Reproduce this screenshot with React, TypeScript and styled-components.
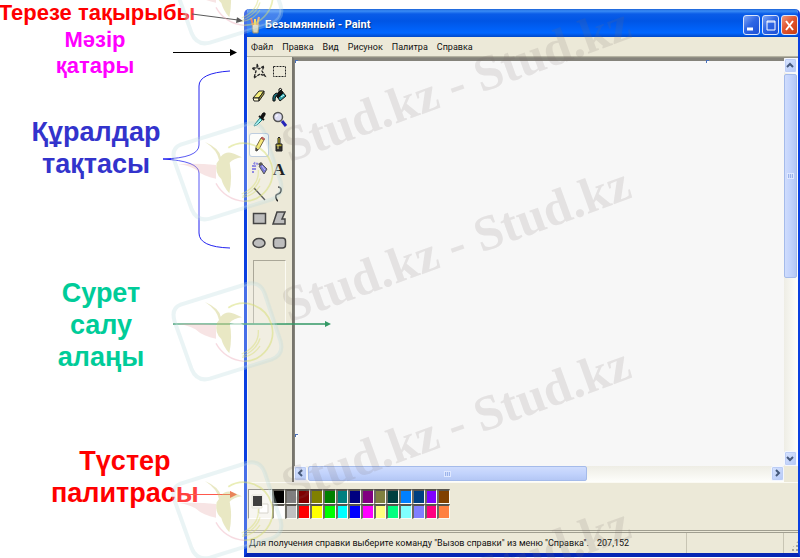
import React from "react";
import styled, { createGlobalStyle, css } from "styled-components";

const UI_FONT = 'Roboto, "Liberation Sans", sans-serif';

const GlobalStyle = createGlobalStyle`
  * { box-sizing: border-box; }
  body { margin: 0; background: #ffffff; font-family: "Liberation Sans", Arial, sans-serif; }
  button { margin: 0; padding: 0; border: 0; background: none; font: inherit; color: inherit; }
  svg { display: block; }
`;

const Slide = styled.main`
  position: relative;
  display: grid;
  grid-template-columns: 244px minmax(0, 1fr);
  min-height: 100vh;
  overflow: hidden;
`;

/* Notes column */

const Notes = styled.aside`
  display: flex;
  flex-direction: column;
  align-items: flex-start;
`;

const Note = styled.p<{ $color: string; $width: number; $top: number; $large?: boolean }>`
  display: flex;
  flex-direction: column;
  align-items: center;
  width: ${(p) => p.$width}px;
  margin: ${(p) => p.$top}px 0 0;
  color: ${(p) => p.$color};
  font-weight: bold;
  font-size: ${(p) => (p.$large ? 27 : 22)}px;
  line-height: ${(p) => (p.$large ? 32 : 26)}px;
  white-space: nowrap;
`;

/* Paint window */

const Window = styled.section`
  display: flex;
  flex-direction: column;
  min-width: 0;
  margin: 9px 0 1px;
  border: solid #0a3fe0;
  border-width: 0 2px 4px 3px;
  border-bottom-color: #0626b4;
  border-radius: 5px 5px 0 0;
  background: #ece9d8;
  overflow: hidden;
  color: #111111;
  font-family: ${UI_FONT};
`;

const TitleBar = styled.header`
  display: flex;
  align-items: center;
  gap: 4px;
  height: 28px;
  margin: 0 -2px 0 -3px;
  padding: 3px 2px 0 6px;
  background: linear-gradient(#1a62d8 0, #3a8cf5 2px, #0a5ce8 5px, #0055e5 12px, #0061f8 20px, #0066ff 24px, #0048c8 28px);
`;

const Title = styled.h1`
  flex: 1;
  margin: 0;
  color: #ffffff;
  font-size: 11px;
  line-height: 16px;
  font-weight: bold;
  text-shadow: 1px 1px 1px #07307f;
  white-space: nowrap;
`;

const WindowButtons = styled.div`
  display: flex;
  gap: 2px;
`;

const WindowButton = styled.button<{ $close?: boolean }>`
  width: 17px;
  height: 20px;
  border: 1px solid #dbe6fb;
  border-radius: 3px;
  background: ${(p) =>
    p.$close
      ? "linear-gradient(135deg, #f0987c, #e2552f 45%, #c83c12)"
      : "linear-gradient(135deg, #7fa5f5, #2f66e4 45%, #1c4fd6)"};
`;

const MenuBar = styled.nav`
  display: flex;
  align-items: center;
  gap: 9px;
  height: 20px;
  padding-left: 4px;
  border-bottom: 1px solid #b5b3a2;
`;

const MenuItem = styled.button`
  line-height: 16px;
  font-size: 9px;
`;

const Workspace = styled.div`
  display: grid;
  grid-template-columns: 45px minmax(0, 1fr);
  flex: 1;
  min-height: 0;
`;

const ToolPanel = styled.div`
  padding: 2px 3px 0 1px;
  border-left: 1px solid #fbfaf3;
`;

const ToolGrid = styled.div`
  display: grid;
  grid-template-columns: 20px 20px;
  grid-auto-rows: 1fr;
  height: 196px;
`;

const ToolButton = styled.button<{ $active?: boolean }>`
  display: flex;
  align-items: center;
  justify-content: center;
  border-radius: 3px;
  ${(p) =>
    p.$active &&
    css`
      background: #fbfbf8;
      box-shadow: inset 0 0 0 1px #a9bcd4;
    `}
`;

const ToolOptions = styled.div`
  height: 64px;
  width: 33px;
  margin: 5px 0 0 4px;
  border: 1px solid;
  border-color: #aaa798 #fbfaf3 #fbfaf3 #aaa798;
`;

const View = styled.div`
  display: grid;
  grid-template: minmax(0, 1fr) 16px / minmax(0, 1fr) 14px;
  border-top: 1px solid #918f84;
  border-left: 2px solid #77756d;
`;

const Sheet = styled.div`
  position: relative;
  border: solid #85837b;
  border-width: 3px 0 0 1px;
  background: #f7f7f7;
`;

const Handle = styled.i<{ $left: string; $top: string }>`
  position: absolute;
  left: ${(p) => p.$left};
  top: ${(p) => p.$top};
  width: 3px;
  height: 3px;
  border: solid #4a70b8;
  border-width: 1px 0 0 1px;
  background: #ffffff;
`;

const ScrollBar = styled.div<{ $vertical?: boolean }>`
  display: flex;
  flex-direction: ${(p) => (p.$vertical ? "column" : "row")};
  gap: 1px;
  padding: ${(p) => (p.$vertical ? "0 1px 0 0" : "0 0 1px")};
  background: ${(p) =>
    p.$vertical ? "linear-gradient(90deg, #eeede5, #fefefb)" : "linear-gradient(#eeede5, #fefefb)"};
`;

const ScrollButton = styled.button<{ $vertical?: boolean }>`
  display: flex;
  align-items: center;
  justify-content: center;
  flex: none;
  width: 13px;
  height: 15px;
  border: 1px solid #f4f7ff;
  border-radius: 2px;
  background: linear-gradient(135deg, #d8e4fe, #b4c8f7);
  box-shadow: inset 0 0 0 1px #bccdf5;
`;

const Thumb = styled.div<{ $vertical?: boolean; $size: string }>`
  display: flex;
  align-items: center;
  justify-content: center;
  flex: 0 0 ${(p) => p.$size};
  border: 1px solid #a5bbea;
  border-radius: 2px;
  background: linear-gradient(${(p) => (p.$vertical ? "90deg" : "180deg")}, #cfdcfd, #c2d3fc 50%, #b4c7f5);
`;

const Grip = styled.span`
  width: 7px;
  height: 6px;
  border: 1px solid #dfe8ff;
  background: repeating-linear-gradient(90deg, #9cb4ea 0 1px, #cfdcfd 1px 2px);
`;

const Spacer = styled.span`
  flex: 1;
`;

const PaletteBar = styled.div`
  display: flex;
  align-items: flex-start;
  height: 48px;
  padding: 6px 1px 0;
  border-top: 1px solid #fbfaf3;
`;

const CurrentColors = styled.div`
  width: 24px;
  height: 30px;
  border: 1px solid;
  border-color: #77756d #ffffff #ffffff #77756d;
  background: #f4f3ec;
`;

const Swatches = styled.div`
  display: grid;
  grid-template: repeat(2, 15px) / repeat(14, 1fr);
  width: 178px;
`;

const Swatch = styled.button<{ $color: string }>`
  border: solid;
  border-width: 2px 1px 1px 2px;
  border-color: #55534c #fbfaf3 #fbfaf3 #6b6961;
  background: ${(p) => p.$color};
`;

const StatusBar = styled.footer`
  display: grid;
  grid-template-columns: 348px 92px minmax(0, 1fr) 14px;
  height: 23px;
  border-top: 3px double #a09e90;
  font-size: 9px;
  line-height: 20px;
  white-space: nowrap;
`;

const StatusCell = styled.span<{ $divider?: boolean }>`
  padding-left: 2px;
  border-right: 1px solid ${(p) => (p.$divider ? "#c8c5b4" : "transparent")};
`;

const SizeGrip = styled.span`
  align-self: end;
  justify-self: end;
  width: 10px;
  height: 12px;
  background: radial-gradient(circle at 1px 1px, #aaa798 1px, transparent 1px) 0 0 / 4px 4px;
  clip-path: polygon(100% 0, 100% 100%, 0 100%);
`;

/* Layers lying over the whole slide */

const Overlay = styled.svg`
  position: absolute;
  left: 0;
  top: 0;
  pointer-events: none;
`;

const Stamp = styled.span<{ $top: number }>`
  position: absolute;
  left: 292px;
  top: ${(p) => p.$top}px;
  color: rgba(120, 105, 110, 0.15);
  font: bold 50px/50px "Liberation Serif", "Times New Roman", serif;
  white-space: nowrap;
  transform: rotate(-20deg);
  transform-origin: 0 100%;
  pointer-events: none;
`;

const ink = { fill: "none", stroke: "#222", strokeWidth: 1 };

const tools: { name: string; art: React.ReactNode }[] = [
  {
    name: "Выделение произвольной области",
    art: <path {...ink} strokeWidth="1.300" strokeDasharray="3 1" d="M8 5l2 5 5-3-2 5 3 5-5-2-6 4 2-7-4-3 5 0z" />,
  },
  { name: "Выделение", art: <rect {...ink} strokeDasharray="2 1" x="4.500" y="7.500" width="12" height="10" /> },
  {
    name: "Ластик",
    art: (
      <g stroke="#222" strokeLinejoin="round">
        <path d="M4 14l6-7h5l-5 7z" fill="#f5ee78" />
        <path d="M4 14h6v3H5z" fill="#fffbd0" />
        <path d="M10 14l5-7v3l-5 7z" fill="#a9a03c" />
      </g>
    ),
  },
  {
    name: "Заливка",
    art: (
      <g stroke="#111">
        <path d="M7 11l5-5 5 6-6 5z" fill="#2aa0a8" />
        <path d="M7 11l5-5 2 3-5 5z" fill="#111" />
        <path d="M10 9V5q2-2 3 1" fill="none" />
        <path d="M4 17q-1-7 4-8l2 1q-4 1-4 7z" fill="#156a74" />
        <path d="M12 13l3-2" stroke="#e8ffff" />
      </g>
    ),
  },
  {
    name: "Выбор цветов",
    art: (
      <g>
        <path d="M12 8l2-3q3-1 2 2l-2 3z" fill="#111" stroke="#111" />
        <path d="M10 8l5 4" stroke="#111" strokeWidth="2" />
        <path d="M11 10l-5 6-1 2 3-1 5-5z" fill="#9ff3f3" stroke="#16767c" />
      </g>
    ),
  },
  {
    name: "Масштаб",
    art: (
      <g>
        <path d="M13 13l4 5" stroke="#2424b8" strokeWidth="3" />
        <circle cx="9" cy="9" r="4.500" fill="#dcdcf2" stroke="#555" strokeWidth="1.500" />
        <path d="M7 9q0-2 2-2" stroke="#fff" fill="none" />
      </g>
    ),
  },
  {
    name: "Карандаш",
    art: (
      <g>
        <path d="M7 14l5-9 3 2-5 9-3 2z" fill="#f3e04c" stroke="#4a3a08" />
        <path d="M12 5l1-1 3 2-1 1z" fill="#d8342a" stroke="#902018" />
        <path d="M7 15v3l2-1z" fill="#111" stroke="#111" />
      </g>
    ),
  },
  {
    name: "Кисть",
    art: (
      <g stroke="#222">
        <path d="M9 11V5l1-1 1 1v6z" fill="#d8c828" />
        <path d="M7 11h6v3H7z" fill="#b0a428" />
        <path d="M7 14h6v4H7z" fill="#333" />
        <path d="M9 12v4" stroke="#e8df80" />
      </g>
    ),
  },
  {
    name: "Распылитель",
    art: (
      <g>
        <path d="M10 9l3-2 5 5-3 5z" fill="#4a4ac8" stroke="#222" />
        <path d="M9 7l3-2 2 2-3 2z" fill="#222" />
        <path d="M4 16V8l2-2 3 1M6 13V9l2-1" stroke="#6a62d8" strokeWidth="2" strokeDasharray="2 1" fill="none" />
        <path d="M13 9l3 4" stroke="#b8b8f0" />
      </g>
    ),
  },
  {
    name: "Надпись",
    art: (
      <text x="10" y="18" textAnchor="middle" fontFamily="Liberation Serif, serif" fontWeight="bold" fontSize="17" fill="#222">
        A
      </text>
    ),
  },
  { name: "Линия", art: <path {...ink} strokeWidth="1.300" d="M5 6l11 12" /> },
  { name: "Кривая", art: <path {...ink} strokeWidth="1.500" d="M9 5q3 0 3 3t-3 4-2 4 2 3" /> },
  { name: "Прямоугольник", art: <rect x="4.500" y="7.500" width="12" height="10" fill="#bdbdbd" stroke="#444" strokeWidth="1.500" /> },
  { name: "Многоугольник", art: <path d="M8 6h8l-3 7h3v5H4z" fill="#bdbdbd" stroke="#444" strokeWidth="1.500" /> },
  { name: "Эллипс", art: <ellipse cx="10" cy="12" rx="6" ry="4.500" fill="#bdbdbd" stroke="#444" strokeWidth="1.500" /> },
  { name: "Скругленный прямоугольник", art: <rect x="4.500" y="7" width="12" height="10" rx="3" fill="#bdbdbd" stroke="#444" strokeWidth="1.500" /> },
];

const menus = ["Файл", "Правка", "Вид", "Рисунок", "Палитра", "Справка"];

const colors = [
  "#000000", "#808080", "#800000", "#808000", "#008000", "#008080", "#000080",
  "#800080", "#808040", "#004040", "#0080ff", "#004080", "#8000ff", "#804000",
  "#ffffff", "#c0c0c0", "#ff0000", "#ffff00", "#00ff00", "#00ffff", "#0000ff",
  "#ff00ff", "#ffff80", "#00ff80", "#80ffff", "#8080ff", "#ff0080", "#ff8040",
];

const arrows = { up: "M1 6l3-3 3 3", down: "M1 3l3 3 3-3", left: "M6 1L3 4l3 3", right: "M3 1l3 3-3 3" };

function Arrow({ dir }: { dir: keyof typeof arrows }) {
  return (
    <svg width="9" height="9" viewBox="0 0 9 9">
      <path d={arrows[dir]} fill="none" stroke="#45597c" strokeWidth="2" />
    </svg>
  );
}

function Hummingbird({ y }: { y: number }) {
  return (
    <svg x="160" y={y} width="135" height="120" viewBox="0 0 405 360" fill="none">
      <path
        d="M62 104L260 42Q300 32 314 70L362 215Q372 255 335 268L150 326Q110 336 95 298L44 155Q32 115 62 104Z"
        fill="#fff"
        fillOpacity=".25"
        stroke="#b9d9df"
        strokeOpacity=".3"
        strokeWidth="12"
      />
      <path d="M205 113A87 87 0 1 1 252 274" stroke="#d6dd70" strokeOpacity=".5" strokeWidth="5" />
      <path d="M252 274Q195 268 168 220" stroke="#f0b8c4" strokeOpacity=".5" strokeWidth="4" />
      <path d="M295 180Q298 228 245 252M300 205Q290 240 248 258M300 228Q280 258 246 262" stroke="#d6dd70" strokeOpacity=".45" strokeWidth="4" />
      <path
        d="M135 96Q178 115 182 140Q200 120 224 132L246 142Q220 146 209 158Q218 200 208 250Q190 230 184 207Q164 190 170 160L177 150Q172 120 135 96Z"
        fill="#c9c66b"
        fillOpacity=".4"
      />
      <path d="M55 162Q120 160 168 165L168 206Q130 200 106 178Q85 166 55 162Z" fill="#e3a6a6" fillOpacity=".3" />
      <path d="M210 162Q245 150 250 168Q242 210 250 247Q230 254 211 250Q220 205 210 162Z" fill="#fff" fillOpacity=".55" />
    </svg>
  );
}

export default function App() {
  return (
    <Slide>
      <GlobalStyle />
      <Notes>
        <Note $color="#ff0000" $width={194} $top={0}>
          <span>Терезе тақырыбы</span>
        </Note>
        <Note $color="#ff00ff" $width={190} $top={1}>
          <span>Мəзір</span>
          <span>қатары</span>
        </Note>
        <Note $color="#3333cc" $width={192} $top={37} $large>
          <span>Құралдар</span>
          <span>тақтасы</span>
        </Note>
        <Note $color="#00cc99" $width={202} $top={97} $large>
          <span>Сурет</span>
          <span>салу</span>
          <span>алаңы</span>
        </Note>
        <Note $color="#ff0000" $width={250} $top={72} $large>
          <span>Түстер</span>
          <span>палитрасы</span>
        </Note>
      </Notes>

      <Window>
        <TitleBar>
          <svg width="11" height="18" viewBox="0 0 11 18">
            <path d="M2 8h7l-1 9H3z" fill="#d9d2b4" stroke="#8f8a70" />
            <path d="M3 9L1 2" stroke="#e8573a" strokeWidth="2" />
            <path d="M5 9V3" stroke="#f1d23c" strokeWidth="2" />
            <path d="M7 9l2-8" stroke="#e8a050" strokeWidth="2" />
          </svg>
          <Title>Безымянный - Paint</Title>
          <WindowButtons>
            <WindowButton aria-label="Свернуть">
              <svg width="15" height="18" viewBox="0 0 15 18">
                <path d="M3 13h6" stroke="#fff" strokeWidth="3" />
              </svg>
            </WindowButton>
            <WindowButton aria-label="Развернуть">
              <svg width="15" height="18" viewBox="0 0 15 18">
                <path d="M4 5h8v9H4zM4 6h8" fill="none" stroke="#fff" strokeWidth="1" />
              </svg>
            </WindowButton>
            <WindowButton $close aria-label="Закрыть">
              <svg width="15" height="18" viewBox="0 0 15 18">
                <path d="M4 5l7 9M11 5l-7 9" stroke="#fff" strokeWidth="2" />
              </svg>
            </WindowButton>
          </WindowButtons>
        </TitleBar>

        <MenuBar>
          {menus.map((m) => (
            <MenuItem key={m}>{m}</MenuItem>
          ))}
        </MenuBar>

        <Workspace>
          <ToolPanel>
            <ToolGrid>
              {tools.map((t) => (
                <ToolButton key={t.name} aria-label={t.name} $active={t.name === "Карандаш"}>
                  <svg width="20" height="24" viewBox="0 0 20 24">
                    {t.art}
                  </svg>
                </ToolButton>
              ))}
            </ToolGrid>
            <ToolOptions />
          </ToolPanel>
          <View>
            <Sheet>
              <Handle $left="0" $top="-1px" />
              <Handle $left="84%" $top="-1px" />
              <Handle $left="0" $top="92%" />
            </Sheet>
            <ScrollBar $vertical>
              <ScrollButton aria-label="Вверх">
                <Arrow dir="up" />
              </ScrollButton>
              <Thumb $vertical $size="50%">
                <Grip />
              </Thumb>
              <Spacer />
              <ScrollButton aria-label="Вниз">
                <Arrow dir="down" />
              </ScrollButton>
            </ScrollBar>
            <ScrollBar>
              <ScrollButton aria-label="Влево">
                <Arrow dir="left" />
              </ScrollButton>
              <Thumb $size="57%">
                <Grip />
              </Thumb>
              <Spacer />
              <ScrollButton aria-label="Вправо">
                <Arrow dir="right" />
              </ScrollButton>
            </ScrollBar>
          </View>
        </Workspace>

        <PaletteBar>
          <CurrentColors>
            <svg width="22" height="28" viewBox="0 0 22 28">
              <path d="M10 14h9v9h-9z" fill="#fff" stroke="#c9c7bb" />
              <path d="M3 5h10v13H3z" fill="#f4f3ec" stroke="#dedcd0" />
              <path d="M4 6h9v10H4z" fill="#000" />
            </svg>
          </CurrentColors>
          <Swatches>
            {colors.map((c) => (
              <Swatch key={c} $color={c} aria-label={c} />
            ))}
          </Swatches>
        </PaletteBar>

        <StatusBar>
          <StatusCell>Для получения справки выберите команду "Вызов справки" из меню "Справка".</StatusCell>
          <StatusCell $divider>207,152</StatusCell>
          <StatusCell $divider />
          <SizeGrip />
        </StatusBar>
      </Window>

      <Overlay width="340" height="558" viewBox="0 0 340 558" fill="none">
        <path
          d="M230 71Q199 73 199 86V145Q199 158 163 159Q199 161 199 173V233Q199 247 230 248"
          stroke="#2222f0"
          strokeWidth="1"
        />
        <path d="M192 14L238 20" stroke="#222" />
        <path d="M243 21L236 23L237 17Z" fill="#222" />
        <path d="M173 52.500H232" stroke="#000" />
        <path d="M237 52.500L230 49V56Z" fill="#000" />
        <path d="M173 324H327" stroke="#339966" strokeWidth="1.500" />
        <path d="M331 324L325 321V327Z" fill="#339966" />
        <path d="M190 494.500H232" stroke="#ff2010" />
        <path d="M237 494.500L230 491V498Z" fill="#ff2010" />
        <Hummingbird y={-66} />
        <Hummingbird y={110} />
        <Hummingbird y={270} />
        <Hummingbird y={449} />
      </Overlay>
      {[120, 280, 460, 620].map((top) => (
        <Stamp key={top} $top={top}>
          Stud.kz - Stud.kz
        </Stamp>
      ))}
    </Slide>
  );
}
